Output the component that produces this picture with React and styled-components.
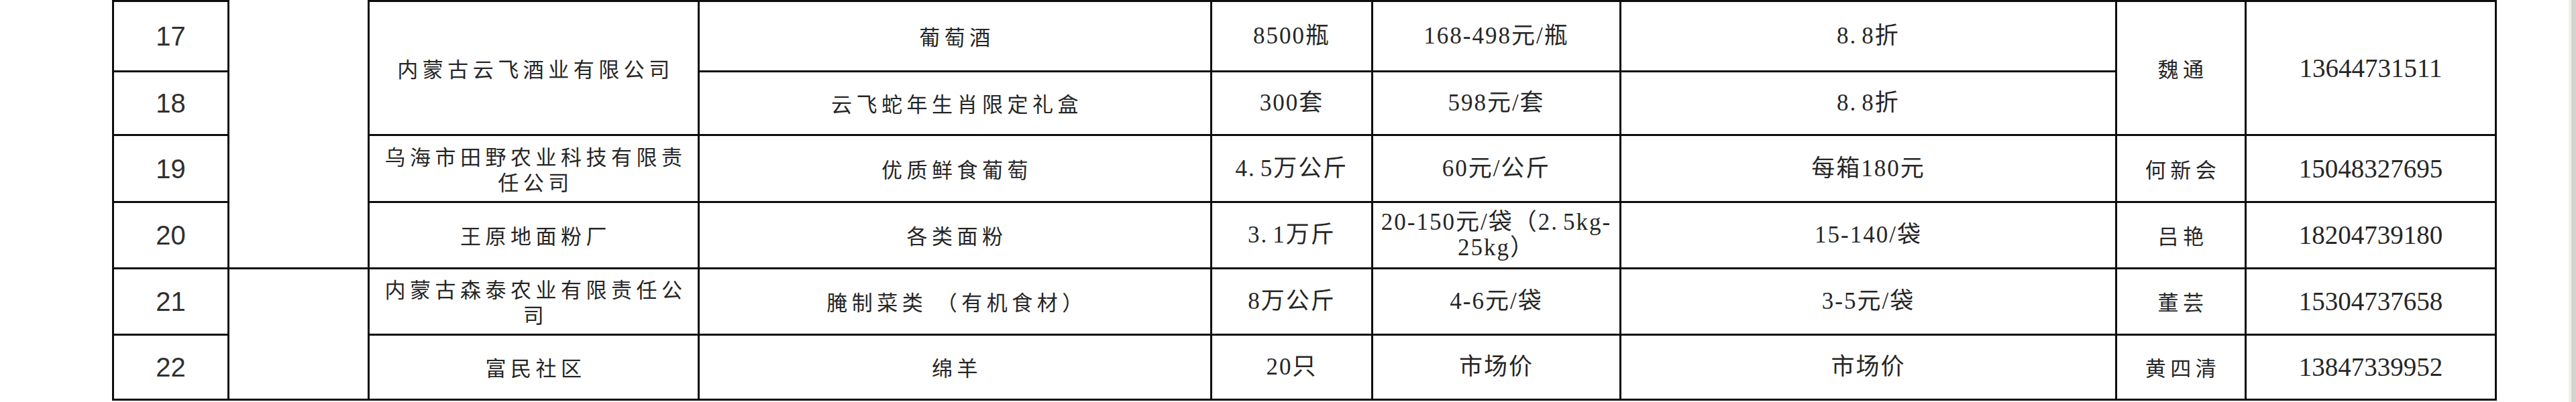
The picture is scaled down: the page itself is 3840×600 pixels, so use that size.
import React from 'react';
import styled, { createGlobalStyle } from 'styled-components';

const GlobalStyle = createGlobalStyle`
  html, body {
    margin: 0;
    padding: 0;
    background: #fff;
  }
  body {
    overflow: hidden;
  }
`

const LINE = '#0d0d0d';

const Page = styled.div`
  display: flex;
  align-items: flex-start;
  width: 3840px;
  height: 600px;
  background: #fff;
`

const Sheet = styled.div`
  display: grid;
  grid-template-columns: 172px 209px 492px 764px 240px 370px 739px 193px 373px;
  grid-template-rows: 105px 95px 100px 99px 99px 97px;
  margin-left: 167px;
  border-left: 3px solid ${LINE};
  border-bottom: 3px solid ${LINE};
`

const Cell = styled.div`
  grid-row: span ${props => props.$rows || 1};
  display: flex;
  align-items: center;
  justify-content: center;
  box-sizing: border-box;
  min-width: 0;
  padding: 0 10px;
  border-right: 3px solid ${LINE};
  border-top: ${props => props.$open ? 'none' : `3px solid ${LINE}`};
  text-align: center;
  line-height: 38px;
  color: #262626;
`

const Label = styled.span`
  display: block;
`

const NoCell = styled(Cell)`
  font-family: "Liberation Sans", Arial, sans-serif;
  font-size: 40px;
  color: #303030;
`

const TextCell = styled(Cell)`
  padding-left: 16px;
  font-family: "Noto Sans CJK SC", sans-serif;
  font-size: 31px;
  letter-spacing: 6.5px;
`

const FigureCell = styled(Cell)`
  font-family: "Liberation Serif", "Noto Sans CJK SC", serif;
  font-size: ${props => props.$size || 35}px;
  letter-spacing: ${props => props.$spacing ?? 2}px;
`

const Dot = styled.span`
  margin-right: 7px;
`

const Edge = styled.div`
  margin-left: auto;
  width: 7px;
  height: 600px;
  background: #d5d5d0;
  border-left: 4px solid #efefec;
`

// a field left out means the cell above spans over that row
const rows = [
  {
    no: 17,
    blank: { rows: 4, open: true },
    company: { text: '内蒙古云飞酒业有限公司', rows: 2 },
    product: '葡萄酒',
    qty: '8500瓶',
    price: '168-498元/瓶',
    discount: '8.8折',
    contact: { text: '魏通', rows: 2 },
    phone: { text: '13644731511', rows: 2 }
  },
  {
    no: 18,
    product: '云飞蛇年生肖限定礼盒',
    qty: '300套',
    price: '598元/套',
    discount: '8.8折'
  },
  {
    no: 19,
    company: { text: '乌海市田野农业科技有限责任公司' },
    product: '优质鲜食葡萄',
    qty: '4.5万公斤',
    price: '60元/公斤',
    discount: '每箱180元',
    contact: { text: '何新会' },
    phone: { text: '15048327695' }
  },
  {
    no: 20,
    company: { text: '王原地面粉厂' },
    product: '各类面粉',
    qty: '3.1万斤',
    price: '20-150元/袋（2.5kg-\n25kg）',
    discount: '15-140/袋',
    contact: { text: '吕艳' },
    phone: { text: '18204739180' }
  },
  {
    no: 21,
    blank: { rows: 2 },
    company: { text: '内蒙古森泰农业有限责任公司' },
    product: '腌制菜类 （有机食材）',
    qty: '8万公斤',
    price: '4-6元/袋',
    discount: '3-5元/袋',
    contact: { text: '董芸' },
    phone: { text: '15304737658' }
  },
  {
    no: 22,
    company: { text: '富民社区' },
    product: '绵羊',
    qty: '20只',
    price: '市场价',
    discount: '市场价',
    contact: { text: '黄四清' },
    phone: { text: '13847339952' }
  }
];

// the scanned sheet prints a wide gap after every decimal point
const renderFigure = text => (
  <Label>
    {text.split('\n').map((line, i) => (
      <React.Fragment key={i}>
        {i > 0 && <br />}
        {line.split('.').map((part, j) => (
          <React.Fragment key={j}>
            {j > 0 && <Dot>.</Dot>}
            {part}
          </React.Fragment>
        ))}
      </React.Fragment>
    ))}
  </Label>
);

const Row = ({ row }) => (
  <>
    <NoCell>{row.no}</NoCell>
    {row.blank && <Cell $rows={row.blank.rows} $open={row.blank.open} />}
    {row.company && (
      <TextCell $rows={row.company.rows}>
        <Label>{row.company.text}</Label>
      </TextCell>
    )}
    <TextCell><Label>{row.product}</Label></TextCell>
    <FigureCell>{renderFigure(row.qty)}</FigureCell>
    <FigureCell>{renderFigure(row.price)}</FigureCell>
    <FigureCell>{renderFigure(row.discount)}</FigureCell>
    {row.contact && (
      <TextCell $rows={row.contact.rows}>
        <Label>{row.contact.text}</Label>
      </TextCell>
    )}
    {row.phone && (
      <FigureCell $rows={row.phone.rows} $size={39} $spacing={0}>
        <Label>{row.phone.text}</Label>
      </FigureCell>
    )}
  </>
);

export default function App() {
  return (
    <>
      <GlobalStyle />
      <Page>
        <Sheet>
          {rows.map(row => <Row key={row.no} row={row} />)}
        </Sheet>
        <Edge />
      </Page>
    </>
  );
}
